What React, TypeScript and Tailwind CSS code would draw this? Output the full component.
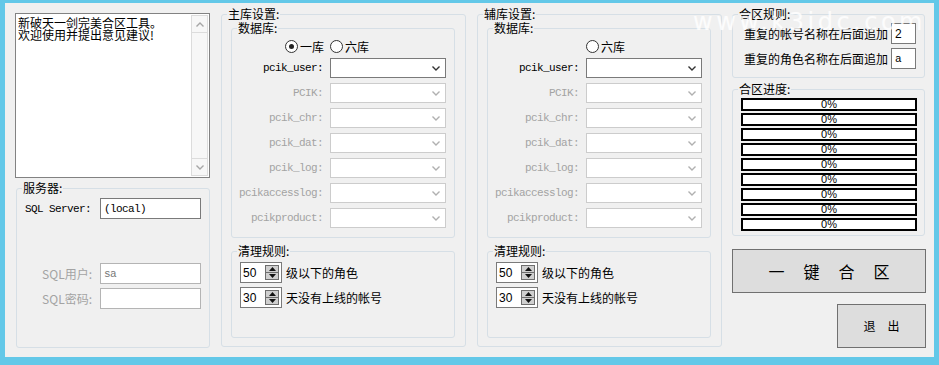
import React from 'react';

const MONO = "font-['Liberation_Mono',monospace] tracking-[-0.6px] text-[11px]";

function GroupBox({ title, className = '', children }: { title: string; className?: string; children?: React.ReactNode }) {
  return (
    <fieldset className={`border border-[#d6dfe6] rounded-[3px] ${className}`}>
      <legend className="ml-[5px] px-[1px] leading-[12px] text-black">{title}</legend>
      {children}
    </fieldset>
  );
}

function Chevron({ up = false, color }: { up?: boolean; color: string }) {
  return (
    <svg width="8" height="5" viewBox="0 0 8 5">
      <path d={up ? 'M0.5 4.5 L4 1 L7.5 4.5' : 'M0.5 0.5 L4 4 L7.5 0.5'} fill="none" stroke={color} strokeWidth="1.4" />
    </svg>
  );
}

function Combo({ label, active = false }: { label: string; active?: boolean }) {
  return (
    <div className="flex items-center justify-end gap-[7px] pr-[8px] h-[20px]">
      <span className={`${MONO} ${active ? 'text-black' : 'text-[#a3a3a3]'}`}>{label}</span>
      <div className={`w-[116px] h-[20px] bg-white border flex items-center justify-end pr-[5px] ${active ? 'border-[#7a7a7a]' : 'border-[#cccccc]'}`}>
        <Chevron color={active ? '#333333' : '#b0b0b0'} />
      </div>
    </div>
  );
}

function Radio({ checked = false, label, hidden = false }: { checked?: boolean; label: string; hidden?: boolean }) {
  return (
    <div className={`flex items-center gap-[2px] ${hidden ? 'invisible' : ''}`}>
      <div className="w-[13px] h-[13px] rounded-full border border-[#333333] bg-white flex items-center justify-center">
        {checked && <div className="w-[5px] h-[5px] rounded-full bg-[#222222]" />}
      </div>
      <span className="leading-[12px]">{label}</span>
    </div>
  );
}

function Spinner({ value, label }: { value: string; label: string }) {
  return (
    <div className="flex items-center gap-[4px]">
      <div className="w-[42px] h-[21px] border border-[#7a7a7a] bg-white flex items-center justify-between pl-[2px] pr-[2px]">
        <span className="font-['Liberation_Sans',sans-serif] text-[12px] leading-none">{value}</span>
        <div className="w-[14px] h-[15px] flex flex-col border border-[#6d6d6d] bg-[#cfcfcf]">
          <div className="flex-1 flex items-center justify-center border-b border-[#6d6d6d]">
            <svg width="7" height="4" viewBox="0 0 7 4"><path d="M3.5 0 L7 4 L0 4 Z" fill="#111" /></svg>
          </div>
          <div className="flex-1 flex items-center justify-center">
            <svg width="7" height="4" viewBox="0 0 7 4"><path d="M0 0 L7 0 L3.5 4 Z" fill="#111" /></svg>
          </div>
        </div>
      </div>
      <span className="leading-[12px]">{label}</span>
    </div>
  );
}

function DbColumn({ title, firstRadio }: { title: string; firstRadio: boolean }) {
  return (
    <GroupBox title={title} className="w-[245px] h-[339px]">
      <div className="px-[9px] pt-[2px]">
        <GroupBox title="数据库:" className="w-[224px] h-[216px]">
          <div className="mt-[6px] pl-[53px] flex items-center gap-[6px]">
            <Radio checked label="一库" hidden={!firstRadio} />
            <Radio label="六库" />
          </div>
          <div className="mt-[5px] flex flex-col gap-[5px]">
            <Combo label="pcik_user:" active />
            <Combo label="PCIK:" />
            <Combo label="pcik_chr:" />
            <Combo label="pcik_dat:" />
            <Combo label="pcik_log:" />
            <Combo label="pcikaccesslog:" />
            <Combo label="pcikproduct:" />
          </div>
        </GroupBox>
        <GroupBox title="清理规则:" className="mt-[7px] w-[224px] h-[93px]">
          <div className="pl-[8px] pt-[5px] flex flex-col gap-[4px]">
            <Spinner value="50" label="级以下的角色" />
            <Spinner value="30" label="天没有上线的帐号" />
          </div>
        </GroupBox>
      </div>
    </GroupBox>
  );
}

export default function App() {
  return (
    <div className="w-[939px] h-[365px] bg-[#63c8e8] pl-[5px] pt-[3px] font-['Noto_Sans_CJK_SC',sans-serif] text-[12px] leading-[12px] text-black">
      <div className="relative w-[929px] h-[354px] bg-[#f0f0f0] flex items-start">
        {/* left: log + server */}
        <div className="ml-[10px] mt-[10px] w-[195px] flex flex-col">
          <div className="h-[165px] border border-[#828282] bg-white flex">
            <div className="flex-1 pl-[2px] pt-[3px]">
              新破天一剑完美合区工具。<br />欢迎使用并提出意见建议!
            </div>
            <div className="w-[17px] my-[1px] mr-[1px] flex flex-col border border-[#dcdcdc] bg-[#f7f7f7]">
              <div className="h-[17px] flex items-center justify-center border-b border-[#dcdcdc]">
                <Chevron up color="#a6a6a6" />
              </div>
              <div className="flex-1" />
              <div className="h-[17px] flex items-center justify-center border-t border-[#dcdcdc]">
                <Chevron color="#a6a6a6" />
              </div>
            </div>
          </div>
          <GroupBox title="服务器:" className="mt-[4px] ml-[1px] w-[194px] h-[166px]">
            <div className="pl-[8px] pt-[4px]">
              <div className="flex items-center gap-[8px]">
                <span className={`w-[67px] ${MONO}`}>SQL Server:</span>
                <div className={`w-[101px] h-[21px] border border-[#7a7a7a] bg-white flex items-center pl-[3px] ${MONO}`}>(local)</div>
              </div>
              <div className="mt-[44px] flex items-center gap-[8px]">
                <span className="w-[67px] text-right text-[#a3a3a3]">SQL用户:</span>
                <div className={`w-[101px] h-[21px] border border-[#b4b4b4] bg-white flex items-center pl-[3px] text-[#777777] ${MONO}`}>sa</div>
              </div>
              <div className="mt-[4px] flex items-center gap-[8px]">
                <span className="w-[67px] text-right text-[#a3a3a3]">SQL密码:</span>
                <div className="w-[101px] h-[21px] border border-[#b4b4b4] bg-white" />
              </div>
            </div>
          </GroupBox>
        </div>

        <div className="ml-[11px] mt-[5px]">
          <DbColumn title="主库设置:" firstRadio />
        </div>
        <div className="ml-[11px] mt-[5px]">
          <DbColumn title="辅库设置:" firstRadio={false} />
        </div>

        {/* right: rules, progress, buttons */}
        <div className="ml-[10px] mt-[5px] w-[194px] flex flex-col">
          <GroupBox title="合区规则:" className="w-[193px] h-[70px]">
            <div className="pl-[11px] pt-[3px] flex flex-col gap-[4px]">
              <div className="flex items-center gap-[3px]">
                <span>重复的帐号名称在后面追加</span>
                <div className="w-[25px] h-[21px] border border-[#7a7a7a] bg-white flex items-center pl-[3px] font-['Liberation_Sans',sans-serif] text-[12px]">2</div>
              </div>
              <div className="flex items-center gap-[3px]">
                <span>重复的角色名称在后面追加</span>
                <div className={`w-[25px] h-[21px] border border-[#7a7a7a] bg-white flex items-center pl-[3px] ${MONO}`}>a</div>
              </div>
            </div>
          </GroupBox>
          <GroupBox title="合区进度:" className="mt-[5px] w-[193px] h-[153px]">
            <div className="pl-[8px] pt-[3px] flex flex-col gap-[2px]">
              {Array.from({ length: 9 }).map((_, i) => (
                <div key={i} className="w-[176px] h-[13px] border-2 border-black bg-white flex items-center justify-center font-['Liberation_Sans',sans-serif] text-[11px] leading-none text-black">
                  0%
                </div>
              ))}
            </div>
          </GroupBox>
          <button className="mt-[13px] w-[194px] h-[44px] border border-[#707070] bg-[#dddddd] flex items-center justify-center gap-[19px] text-[16px] leading-[16px] text-black">
            <span>一</span><span>键</span><span>合</span><span>区</span>
          </button>
          <button className="mt-[11px] self-end w-[89px] h-[44px] border border-[#707070] bg-[#dddddd] flex items-center justify-center gap-[12px] text-[12px] text-black">
            <span>退</span><span>出</span>
          </button>
        </div>

        <div className="absolute left-[688px] top-[7px] font-['DejaVu_Sans',sans-serif] text-[24px] leading-[24px] tracking-[3.5px] text-white/80 pointer-events-none">
          www.k3idc.com
        </div>
      </div>
    </div>
  );
}
